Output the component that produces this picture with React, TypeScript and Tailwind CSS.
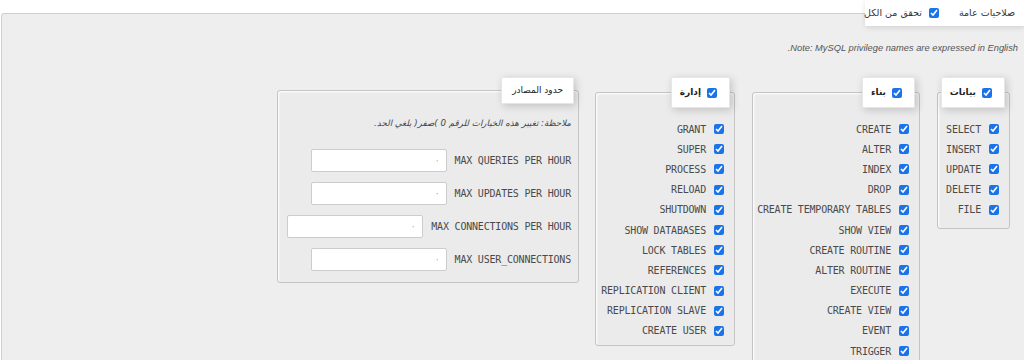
import React from "react";

const DATA = ["SELECT", "INSERT", "UPDATE", "DELETE", "FILE"];
const STRUCTURE = [
  "CREATE",
  "ALTER",
  "INDEX",
  "DROP",
  "CREATE TEMPORARY TABLES",
  "SHOW VIEW",
  "CREATE ROUTINE",
  "ALTER ROUTINE",
  "EXECUTE",
  "CREATE VIEW",
  "EVENT",
  "TRIGGER",
];
const ADMIN = [
  "GRANT",
  "SUPER",
  "PROCESS",
  "RELOAD",
  "SHUTDOWN",
  "SHOW DATABASES",
  "LOCK TABLES",
  "REFERENCES",
  "REPLICATION CLIENT",
  "REPLICATION SLAVE",
  "CREATE USER",
];
const LIMITS = [
  "MAX QUERIES PER HOUR",
  "MAX UPDATES PER HOUR",
  "MAX CONNECTIONS PER HOUR",
  "MAX USER_CONNECTIONS",
];

function Check() {
  return (
    <input
      type="checkbox"
      defaultChecked
      className="m-0 w-[10px] h-[10px] shrink-0 accent-[#1a73e8]"
    />
  );
}

function Legend({ title, check }: { title: string; check?: boolean }) {
  return (
    <legend className="mr-[4px] bg-white border border-[#e6e6e6] shadow-[2px_2px_8px_rgba(0,0,0,0.18)]">
      <div
        className={`flex items-center gap-[6px] ${check ? "h-[29px] pr-[12px] pl-[8px] font-bold" : "h-[25px] px-[10px]"} text-[9px] text-[#222] font-['DejaVu_Sans',sans-serif] whitespace-nowrap`}
      >
        {check && <Check />}
        <span>{title}</span>
      </div>
    </legend>
  );
}

function PrivGroup({
  title,
  items,
  width,
  pl,
  pb,
}: {
  title: string;
  items: string[];
  width: string;
  pl: string;
  pb: string;
}) {
  return (
    <fieldset
      className={`${width} min-w-0 shrink-0 border border-[#c4c4c4] rounded-[3px] bg-[#ebebeb] p-0 shadow-[inset_1px_1px_2px_#fff]`}
    >
      <Legend title={title} check />
      <div className={`pt-[11px] pr-[10px] ${pl} ${pb}`}>
        {items.map((it) => (
          <div key={it} className="h-[20.2px] flex items-center gap-[8px]">
            <Check />
            <span className="font-['DejaVu_Sans_Mono',monospace] text-[10px] tracking-[-0.2px] text-[#4a4a4a] whitespace-nowrap">
              {it}
            </span>
          </div>
        ))}
      </div>
    </fieldset>
  );
}

export default function App() {
  return (
    <div
      dir="rtl"
      className="w-[1024px] h-[360px] overflow-hidden bg-white font-['Liberation_Sans',sans-serif]"
    >
      <fieldset className="ml-[1px] -mr-[7px] h-[420px] border border-[#cfcfcf] rounded-[3px] bg-[#eeeeee] p-0 pr-[6px]">
        <legend className="bg-white shadow-[1px_1px_6px_rgba(0,0,0,0.15)]">
          <div className="w-[159px] h-[26px] flex items-center pr-[9px] text-[9.5px] text-[#333] font-['DejaVu_Sans',sans-serif] whitespace-nowrap">
            <span>صلاحيات عامة</span>
            <span className="mr-[20px] flex items-center gap-[7px]">
              <Check />
              <span>تحقق من الكل</span>
            </span>
          </div>
        </legend>

        <p className="mt-[15px] mr-[6px] text-[9.3px] italic text-[#555] leading-[14px]">
          Note: MySQL privilege names are expressed in English.
        </p>

        <div className="mt-[22px] mr-[14px] flex items-start gap-[17px]">
          <PrivGroup title="بيانات" items={DATA} width="w-[73px]" pl="pl-[6px]" pb="pb-[8px]" />
          <PrivGroup title="بناء" items={STRUCTURE} width="w-[168px]" pl="pl-[4px]" pb="pb-[8px]" />
          <PrivGroup title="إدارة" items={ADMIN} width="w-[140px]" pl="pl-[4px]" pb="pb-[4px]" />

          <fieldset className="w-[302px] min-w-0 -mr-[1px] shrink-0 border border-[#c4c4c4] rounded-[3px] bg-[#ebebeb] p-0 shadow-[inset_1px_1px_2px_#fff]">
            <Legend title="حدود المصادر" />
            <div className="pt-[12px] pb-[11px] pr-[7px] pl-[9px]">
              <p className="text-[8.7px] italic leading-[14px] text-[#444] font-['DejaVu_Sans',sans-serif]">
                ملاحظة: تغيير هذه الخيارات للرقم 0 )صفر( يلغي الحد.
              </p>
              <div className="mt-[19px] flex flex-col gap-[10px]">
                {LIMITS.map((l) => (
                  <div key={l} className="flex items-center gap-[8px]">
                    <span className="font-['DejaVu_Sans_Mono',monospace] text-[10px] tracking-[-0.2px] text-[#4a4a4a] whitespace-nowrap">
                      {l}
                    </span>
                    <input
                      type="text"
                      defaultValue="٠"
                      className="w-[136px] h-[23px] bg-white border border-[#cccccc] rounded-[2px] px-[7px] text-[8px] text-[#777] outline-none"
                    />
                  </div>
                ))}
              </div>
            </div>
          </fieldset>
        </div>
      </fieldset>
    </div>
  );
}
